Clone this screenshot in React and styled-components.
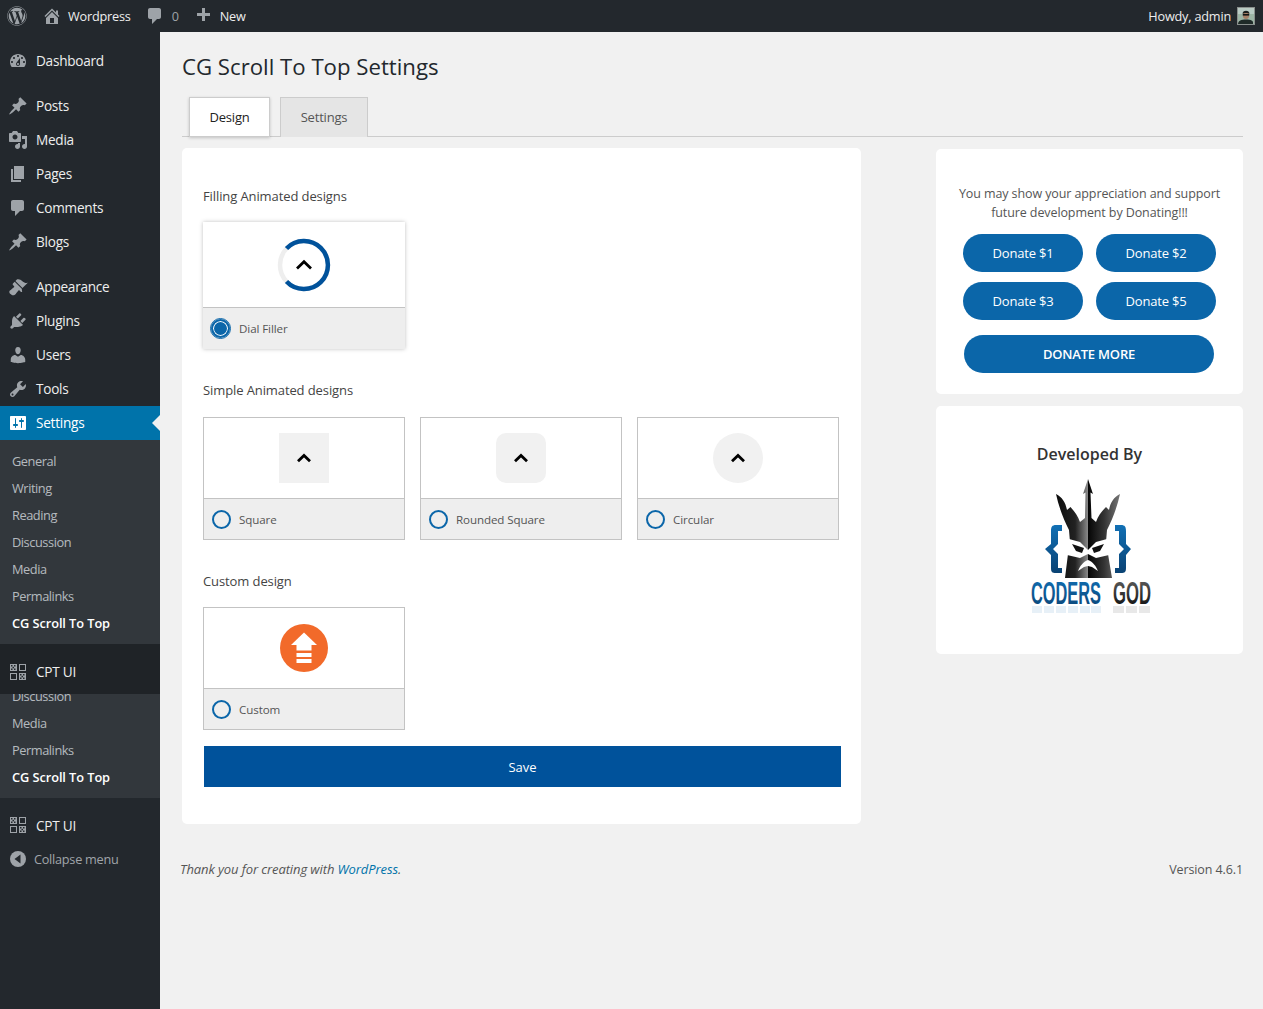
import React from 'react'
import styled, { createGlobalStyle } from 'styled-components'
import { FaWordpress } from 'react-icons/fa'

const Global = createGlobalStyle`
  body {
    margin: 0;
    background: #f1f1f1;
    font-family: "Open Sans", "Noto Sans", sans-serif;
    color: #444;
  }
  * { box-sizing: border-box; }
`

const paths = {
  dashboard: 'M3.76 16h12.48c1.1-1.37 1.76-3.11 1.76-5 0-4.42-3.58-8-8-8s-8 3.58-8 8c0 1.89.66 3.63 1.76 5zM10 4c.55 0 1 .45 1 1s-.45 1-1 1-1-.45-1-1 .45-1 1-1zM6 6c.55 0 1 .45 1 1s-.45 1-1 1-1-.45-1-1 .45-1 1-1zm8 0c.55 0 1 .45 1 1s-.45 1-1 1-1-.45-1-1 .45-1 1-1zm-5.37 5.55L12 7v6c0 1.1-.9 2-2 2s-2-.9-2-2c0-.57.24-1.08.63-1.45zM4 10c.55 0 1 .45 1 1s-.45 1-1 1-1-.45-1-1 .45-1 1-1zm12 0c.55 0 1 .45 1 1s-.45 1-1 1-1-.45-1-1 .45-1 1-1zm-5 3c0-.55-.45-1-1-1s-1 .45-1 1 .45 1 1 1 1-.45 1-1z',
  home: 'M16 8.5l1.53 1.53-1.06 1.06L10 4.62l-6.47 6.47-1.06-1.06L10 2.5l4 4v-2h2v4zm-6-2.46l6 5.99V18H4v-5.97zM12 17v-5H8v5h4z',
  comment: 'M5 2h9c1.1 0 2 .9 2 2v7c0 1.1-.9 2-2 2h-2l-5 5v-5H5c-1.1 0-2-.9-2-2V4c0-1.1.9-2 2-2z',
  plus: 'M17 7v3h-5v5H9v-5H4V7h5V2h3v5h5z',
  pin: 'M10.44 3.02l1.82-1.82 6.36 6.35-1.83 1.82c-1.05-.68-2.48-.57-3.41.36l-.75.75c-.92.93-1.04 2.35-.35 3.41l-1.83 1.82-2.41-2.41-2.8 2.79c-.42.42-3.38 2.71-3.8 2.29s1.86-3.39 2.28-3.81l2.79-2.79L4.1 9.36l1.83-1.82c1.05.69 2.48.57 3.4-.36l.75-.75c.93-.92 1.05-2.35.36-3.41z',
  media: 'M13 11V4c0-.55-.45-1-1-1h-1.67L9 1H5L3.67 3H2c-.55 0-1 .45-1 1v7c0 .55.45 1 1 1h10c.55 0 1-.45 1-1zM7 4.5c1.38 0 2.5 1.12 2.5 2.5S8.38 9.5 7 9.5 4.5 8.38 4.5 7 5.62 4.5 7 4.5zM14 6h5v10.5c0 1.38-1.12 2.5-2.5 2.5S14 17.88 14 16.5s1.12-2.5 2.5-2.5c.17 0 .34.02.5.05V9h-3V6zm-4 8.05V13h2v3.5c0 1.38-1.12 2.5-2.5 2.5S7 17.88 7 16.5 8.12 14 9.5 14c.17 0 .34.02.5.05z',
  page: 'M6 15V2h10v13H6zm-1 1h8v2H3V5h2v11z',
  brush: 'M14.48 11.06L7.41 3.99l1.5-1.5c.5-.56 2.3-.47 3.51.32 1.21.8 1.43 1.28 2.91 2.1 1.18.64 2.45 1.26 4.45.85zm-.71.71L6.7 4.7 4.93 6.47c-.39.39-.39 1.02 0 1.41l1.06 1.06c.39.39.39 1.03 0 1.42-.6.6-1.43 1.11-2.21 1.69-.35.26-.7.53-1.01.84C1.43 13.23.4 14.96 2.56 17.1c2.15 2.15 3.87 1.11 5.2-.22.31-.31.58-.66.84-1.01.58-.78 1.09-1.61 1.69-2.21.39-.39 1.02-.39 1.41 0l1.06 1.06c.39.39 1.02.39 1.41 0z',
  plugin: 'M13.11 4.36L9.87 7.6 8 5.73l3.24-3.24c.35-.34 1.05-.2 1.56.32.52.51.66 1.21.31 1.55zm-8 1.77l.91-1.12 9.01 9.01-1.19.84c-.71.71-2.63 1.16-3.82 1.16H6.14L4.9 17.26c-.59.59-1.54.59-2.12 0-.59-.58-.59-1.53 0-2.12l1.24-1.24v-3.88c0-1.13.4-3.19 1.09-3.89zm7.26 3.97l3.24-3.24c.34-.35 1.04-.21 1.55.31.52.51.66 1.21.31 1.55l-3.24 3.25z',
  users: 'M10 9.25c-2.27 0-2.73-3.44-2.73-3.44C7 4.02 7.82 2 9.97 2c2.16 0 2.98 2.02 2.71 3.81 0 0-.41 3.44-2.68 3.44zm0 2.57L12.72 10c2.39 0 4.52 2.33 4.52 4.53v2.49s-3.65 1.13-7.24 1.13c-3.65 0-7.24-1.13-7.24-1.13v-2.49c0-2.25 1.94-4.48 4.47-4.48z',
  tools: 'M16.68 9.77c-1.34 1.34-3.3 1.67-4.95.99l-5.41 6.52c-.99.99-2.59.99-3.58 0s-.99-2.59 0-3.57l6.52-5.42c-.68-1.65-.35-3.61.99-4.95 1.28-1.28 3.12-1.62 4.72-1.06l-2.89 2.89 2.82 2.82 2.86-2.87c.53 1.58.18 3.39-1.08 4.65zM3.81 16.21c.4.39 1.04.39 1.43 0 .4-.4.4-1.04 0-1.43-.39-.4-1.03-.4-1.43 0-.39.39-.39 1.03 0 1.43z',
  settings: 'M18 16V4c0-.55-.45-1-1-1H3c-.55 0-1 .45-1 1v12c0 .55.45 1 1 1h14c.55 0 1-.45 1-1zM8 11h1c.55 0 1 .45 1 1s-.45 1-1 1H8v1.5c0 .28-.22.5-.5.5s-.5-.22-.5-.5V13H6c-.55 0-1-.45-1-1s.45-1 1-1h1V5.5c0-.28.22-.5.5-.5s.5.22.5.5V11zm5-2h-1c-.55 0-1-.45-1-1s.45-1 1-1h1V5.5c0-.28.22-.5.5-.5s.5.22.5.5V7h1c.55 0 1 .45 1 1s-.45 1-1 1h-1v5.5c0 .28-.22.5-.5.5s-.5-.22-.5-.5V9z',
}

const Dash = ({ name, size = 20, color = '#9ea3a8' }) => (
  <svg width={size} height={size} viewBox="0 0 20 20" fill={color} style={{ flex: 'none' }}>
    <path d={paths[name]} fillRule="evenodd" />
  </svg>
)

const CptIcon = () => (
  <svg width="20" height="20" viewBox="0 0 20 20" style={{ flex: 'none' }}>
    <g fill="#9ea3a8">
      <rect x="2" y="2" width="7" height="7" />
      <rect x="11" y="11" width="7" height="7" />
    </g>
    <g fill="#23282d">
      <rect x="3" y="3" width="1.5" height="1.5" /><rect x="6" y="3" width="1.5" height="1.5" />
      <rect x="4.5" y="4.8" width="1.5" height="1.5" />
      <rect x="3" y="6.5" width="1.5" height="1.5" /><rect x="6" y="6.5" width="1.5" height="1.5" />
      <rect x="12" y="12" width="1.5" height="1.5" /><rect x="15" y="12" width="1.5" height="1.5" />
      <rect x="13.5" y="13.8" width="1.5" height="1.5" />
      <rect x="12" y="15.5" width="1.5" height="1.5" /><rect x="15" y="15.5" width="1.5" height="1.5" />
    </g>
    <g fill="none" stroke="#9ea3a8">
      <rect x="11.5" y="2.5" width="6" height="6" />
      <rect x="2.5" y="11.5" width="6" height="6" />
    </g>
  </svg>
)

const CollapseIcon = () => (
  <svg width="16" height="16" viewBox="0 0 16 16" style={{ flex: 'none' }}>
    <circle cx="8" cy="8" r="8" fill="#9ea3a8" />
    <path d="M10.5 3.5v9L4.5 8z" fill="#23282d" />
  </svg>
)

const Avatar = () => (
  <svg width="18" height="18" viewBox="0 0 18 18" style={{ flex: 'none' }}>
    <rect width="18" height="18" fill="#8a8f8d" />
    <rect x="1" y="1" width="16" height="16" fill="#9db5a6" />
    <rect x="1" y="1" width="16" height="6" fill="#b9cbc4" />
    <path d="M1 17c.4-3.500 3-4.500 8-4.500s7.600 1 7 4.500z" fill="#1f2a28" />
    <ellipse cx="9" cy="8" rx="3.200" ry="4" fill="#a67f66" />
    <path d="M5.600 7C5.200 2.800 12.800 2.800 12.400 7c-1.400-1.300-5.400-1.300-6.800 0z" fill="#1a1f1e" />
    <rect x="5.800" y="7" width="6.400" height="1.600" fill="#111514" />
  </svg>
)

const Chevron = () => (
  <svg width="16" height="10" viewBox="0 0 16 10" fill="none">
    <path d="M2 8.200 8 2.400 14 8.200" stroke="#000" strokeWidth="2.800" />
  </svg>
)

const AdminBar = styled.header`
  height: 32px;
  background: #23282d;
  display: flex;
  align-items: center;
  padding: 0 8px 0 7px;
  font-size: 12.7px;
  letter-spacing: -0.2px;
  color: #eee;
`

const BarItem = styled.div`
  display: flex;
  align-items: center;
  gap: ${p => p.$gap || 6}px;
  margin-left: ${p => p.$left || 0}px;
`

const Muted = styled.span`
  color: #9ea3a8;
`

const Spacer = styled.div`
  flex: 1;
`

const Shell = styled.div`
  display: grid;
  grid-template-columns: 160px 1fr;
  min-height: 977px;
`

const Side = styled.nav`
  background: #23282d;
  padding-top: 12px;
`

const MenuRow = styled.div`
  position: relative;
  height: 34px;
  display: flex;
  align-items: center;
  gap: ${p => p.$gap || 8}px;
  padding: 0 0 1px ${p => p.$left || 8}px;
  font-size: ${p => (p.$muted ? 12.7 : 13.6)}px;
  letter-spacing: -0.25px;
  color: ${p => (p.$active ? '#fff' : p.$muted ? '#a0a5aa' : '#eee')};
  background: ${p => (p.$active ? '#0073aa' : 'transparent')};
  margin-top: ${p => (p.$sep ? 11 : 0)}px;
  ${p => p.$active && `
    &::after {
      content: '';
      position: absolute;
      right: 0;
      top: 9px;
      border: 8px solid transparent;
      border-right-color: #f1f1f1;
      border-left-width: 0;
    }
  `}
`

const SubPanel = styled.div`
  background: #32373c;
  padding: ${p => (p.$clip ? '0 0 6.5px' : '7.5px 0')};
  overflow: hidden;
`

const SubRow = styled.div`
  height: 27px;
  line-height: 27px;
  padding-left: 12px;
  font-size: 12.8px;
  letter-spacing: ${p => (p.$current ? '-0.08px' : '-0.45px')};
  color: ${p => (p.$current ? '#fff' : 'rgba(240, 245, 250, 0.7)')};
  font-weight: ${p => (p.$current ? 600 : 400)};
  margin-top: ${p => (p.$clip ? -11 : 0)}px;
`

const DarkBand = styled.div`
  background: #1f2327;
  padding: 11px 0 5px;
`

const Main = styled.main`
  padding: 19px 20px 0 22px;
`

const Title = styled.h1`
  margin: 0;
  font-size: 22.2px;
  line-height: 31px;
  font-weight: 400;
  color: #23282d;
`

const TabRow = styled.div`
  margin-top: 15px;
  height: 40px;
  border-bottom: 1px solid #ccc;
  display: flex;
  gap: 10px;
  padding-left: 7px;
`

const Tab = styled.div`
  height: 40px;
  width: ${p => p.$w}px;
  display: flex;
  align-items: center;
  justify-content: center;
  padding-bottom: ${p => (p.$active ? 0 : 2)}px;
  font-size: 13px;
  letter-spacing: -0.2px;
  color: ${p => (p.$active ? '#222' : '#555')};
  background: ${p => (p.$active ? '#fff' : '#e5e5e5')};
  border: 1px solid #ccc;
  border-bottom: ${p => (p.$active ? '1px solid #ccc' : '0')};
  box-shadow: ${p => (p.$active ? '0 1px 3px rgba(0,0,0,.2)' : 'none')};
`

const Columns = styled.div`
  display: grid;
  grid-template-columns: 679px 307px;
  justify-content: space-between;
  margin-top: 11px;
  align-items: start;
`

const Panel = styled.section`
  background: #fff;
  border-radius: 5px;
  padding: 38px 21px 37px;
`

const Heading = styled.h3`
  margin: ${p => (p.$first ? 0 : 31)}px 0 ${p => p.$after || 16}px;
  font-size: 13px;
  line-height: 20px;
  font-weight: 400;
  letter-spacing: -0.1px;
  color: #444;
`

const CardRow = styled.div`
  display: flex;
  gap: 15px;
`

const Card = styled.div`
  width: 202px;
  border: ${p => (p.$raised ? '0' : '1px solid #c3c3c3')};
  box-shadow: ${p => (p.$raised ? '0 0 4px rgba(0,0,0,.25)' : 'none')};
  background: #fff;
`

const Preview = styled.div`
  height: ${p => (p.$raised ? 85 : 80)}px;
  display: flex;
  align-items: center;
  justify-content: center;
`

const ArrowBox = styled.div`
  width: 50px;
  height: 50px;
  background: #f1f1f1;
  border-radius: ${p => p.$radius || 0};
  display: flex;
  align-items: center;
  justify-content: center;
`

const CardFoot = styled.div`
  height: ${p => (p.$raised ? 42 : 41)}px;
  background: #eee;
  border-top: 1px solid #c3c3c3;
  display: flex;
  align-items: center;
  gap: ${p => (p.$raised ? 9 : 8)}px;
  padding-left: 8px;
  font-size: 11.6px;
  letter-spacing: -0.1px;
  color: #555;
`

const Radio = styled.span`
  width: 19px;
  height: 19px;
  border-radius: 50%;
  border: 2px solid #0b66a9;
  background: ${p => (p.$on ? '#0b66a9' : 'transparent')};
  box-shadow: ${p => (p.$on ? 'inset 0 0 0 1px #fff' : 'none')};
  outline: ${p => (p.$on ? '1px solid #0b66a9' : 'none')};
  flex: none;
`

const SaveButton = styled.button`
  display: block;
  width: 637px;
  height: 41px;
  margin: 16px 0 0 1px;
  border: 0;
  background: #00529b;
  color: #fff;
  font: inherit;
  font-size: 13px;
`

const SideCol = styled.aside`
  display: flex;
  flex-direction: column;
  gap: 12px;
  padding-top: 1px;
`

const SideCard = styled.div`
  background: #fff;
  border-radius: 5px;
  padding: ${p => p.$pad};
  text-align: center;
`

const Note = styled.p`
  margin: 0;
  font-size: 12.5px;
  line-height: 19px;
  letter-spacing: -0.1px;
  color: #555;
`

const DonateGrid = styled.div`
  display: grid;
  grid-template-columns: 120px 120px;
  gap: 10px 13px;
  justify-content: center;
  margin-top: 12px;
`

const Donate = styled.button`
  width: ${p => p.$w || 120}px;
  height: 38px;
  border: 0;
  border-radius: 19px;
  background: #0b66a9;
  color: #fff;
  font: inherit;
  font-size: 13px;
  letter-spacing: -0.2px;
  font-weight: ${p => (p.$strong ? 600 : 400)};
  margin: ${p => (p.$strong ? '15px 1px 0 0' : 0)};
`

const DevTitle = styled.h2`
  margin: 0;
  font-size: 16px;
  line-height: 24px;
  font-weight: 600;
  color: #333;
`

const LogoWrap = styled.div`
  height: 150px;
  margin-top: 4px;
`

const Footer = styled.footer`
  margin: 37px 0 0 -2px;
  display: flex;
  justify-content: space-between;
  font-size: 12.5px;
  line-height: 18px;
  letter-spacing: -0.1px;
  color: #555;
`

const Thanks = styled.em`
  display: block;
  font-style: italic;
  font-size: 13px;
  line-height: 16px;
  > a { color: #0073aa; text-decoration: none; }
`

const reflectBars = [
  [22, 10, '#0f6cb0'], [34, 10, '#0f6cb0'], [46, 10, '#0f6cb0'], [58, 10, '#0f6cb0'], [70, 10, '#0f6cb0'], [81, 10, '#0f6cb0'],
  [103, 11, '#222'], [116, 11, '#222'], [129, 11, '#222'],
]

const Logo = () => (
  <svg width="160" height="150" viewBox="0 0 160 150">
    <defs>
      <linearGradient id="lhalf" x1="0" x2="1" y1="0" y2="0">
        <stop offset="0" stopColor="#0c0c0c" />
        <stop offset="0.6" stopColor="#222" />
        <stop offset="1" stopColor="#8a8a8a" />
      </linearGradient>
      <linearGradient id="rhalf" x1="0" x2="1" y1="0" y2="0">
        <stop offset="0" stopColor="#050505" />
        <stop offset="0.5" stopColor="#333" />
        <stop offset="1" stopColor="#777" />
      </linearGradient>
      <linearGradient id="blue" x1="0" x2="0" y1="0" y2="1">
        <stop offset="0" stopColor="#1170b5" />
        <stop offset="1" stopColor="#0a4273" />
      </linearGradient>
      <linearGradient id="dark" x1="0" x2="0" y1="0" y2="1">
        <stop offset="0" stopColor="#666" />
        <stop offset="1" stopColor="#050505" />
      </linearGradient>
    </defs>
    <path d="M78 9 73 24 75.500 22.500 75 48 70 52C68 46 64 41 60.500 37L57 40C55.500 32 52 27 46 24 49 38 54 50 59 60L60 72 58 84 55 108H78Z" fill="url(#lhalf)" />
    <path d="M78 9 83 24 80.500 22.500 81.500 48 86 52C88 46 92 41 96 37L99 40C100.500 32 104 27 110 24 107 38 102 50 97 60L96 72 98 84 102 108H78Z" fill="url(#rhalf)" />
    <path d="M59 69 70 72 78 80 86 72 97 69 99 85 86 88 78 84 70 88 57 85Z" fill="#fff" />
    <path d="M62 74 74 78 72 83 66 81ZM94 74 82 78 84 83 90 81Z" fill="#111" />
    <path d="M78 90C73 92 70 96 68 101L74 97 78 96 82 97 88 101C86 96 83 92 78 90Z" fill="#fff" />
    <path d="M52 55H46C42 55 41 57 41 61V74L35 79 41 85V98C41 102 42 103 46 103H52V98H48V84L43 79 48 74V61H52Z" fill="url(#blue)" />
    <path d="M105 55H111C115 55 116 57 116 61V74L121 79 116 85V98C116 102 115 103 111 103H105V98H109V84L114 79 109 74V61H105Z" fill="url(#blue)" />
    <g fontFamily="'Liberation Sans Narrow', 'Liberation Sans', sans-serif" fontWeight="700" fontSize="31">
      <text x="21" y="134" textLength="70" lengthAdjust="spacingAndGlyphs" fill="url(#blue)">CODERS</text>
      <text x="103" y="134" textLength="38" lengthAdjust="spacingAndGlyphs" fill="url(#dark)">GOD</text>
    </g>
    {reflectBars.map(([x, w, c]) => (
      <rect key={x} x={x} y="136" width={w} height="7" fill={c} opacity="0.1" />
    ))}
  </svg>
)

const Dial = () => (
  <svg width="54" height="54" viewBox="0 0 54 54">
    <circle cx="27" cy="27" r="24" fill="none" stroke="#eee" strokeWidth="4.500" />
    <path d="M9.500 10.500A24 24 0 1 1 9.500 43.500" fill="none" stroke="#00529b" strokeWidth="4.500" />
    <path d="M20 30.500 27 23.800 34 30.500" fill="none" stroke="#000" strokeWidth="2.800" />
  </svg>
)

const UploadIcon = () => (
  <svg width="48" height="48" viewBox="0 0 48 48">
    <circle cx="24" cy="24" r="24" fill="#f26a2a" />
    <path d="M24 8.500 37 21H11Z" fill="#fff" />
    <rect x="16.500" y="21" width="15" height="5.500" fill="#fff" />
    <rect x="16.500" y="29" width="15" height="4" fill="#fff" />
    <rect x="16.500" y="35" width="15" height="4" fill="#fff" />
  </svg>
)

const mainItems = [
  ['pin', 'Posts'],
  ['media', 'Media'],
  ['page', 'Pages'],
  ['comment', 'Comments'],
  ['pin', 'Blogs'],
]
const adminItems = [
  ['brush', 'Appearance'],
  ['plugin', 'Plugins'],
  ['users', 'Users'],
  ['tools', 'Tools'],
]
const subItems = ['General', 'Writing', 'Reading', 'Discussion', 'Media', 'Permalinks']
const simpleCards = [
  { label: 'Square', radius: '0' },
  { label: 'Rounded Square', radius: '10px' },
  { label: 'Circular', radius: '50%' },
]

export default function App() {
  return (
    <>
      <Global />
      <AdminBar>
        <FaWordpress size={20} color="#9ea3a8" />
        <BarItem $left={15}><Dash name="home" />Wordpress</BarItem>
        <BarItem $left={14} $gap={7}><Dash name="comment" /><Muted>0</Muted></BarItem>
        <BarItem $left={14} $gap={7}><Dash name="plus" />New</BarItem>
        <Spacer />
        <BarItem>Howdy, admin<Avatar /></BarItem>
      </AdminBar>
      <Shell>
        <Side>
          <MenuRow><Dash name="dashboard" />Dashboard</MenuRow>
          {mainItems.map(([icon, label], i) => (
            <MenuRow key={label} $sep={i === 0}><Dash name={icon} />{label}</MenuRow>
          ))}
          {adminItems.map(([icon, label], i) => (
            <MenuRow key={label} $sep={i === 0}><Dash name={icon} />{label}</MenuRow>
          ))}
          <MenuRow $active><Dash name="settings" color="#fff" />Settings</MenuRow>
          <SubPanel>
            {subItems.map(s => <SubRow key={s}>{s}</SubRow>)}
            <SubRow $current>CG Scroll To Top</SubRow>
          </SubPanel>
          <DarkBand>
            <MenuRow><CptIcon />CPT UI</MenuRow>
          </DarkBand>
          <SubPanel $clip>
            <SubRow $clip>Discussion</SubRow>
            <SubRow>Media</SubRow>
            <SubRow>Permalinks</SubRow>
            <SubRow $current>CG Scroll To Top</SubRow>
          </SubPanel>
          <MenuRow $sep><CptIcon />CPT UI</MenuRow>
          <MenuRow $muted $left={10} $gap={8}><CollapseIcon />Collapse menu</MenuRow>
        </Side>
        <Main>
          <Title>CG Scroll To Top Settings</Title>
          <TabRow>
            <Tab $active $w={81}>Design</Tab>
            <Tab $w={88}>Settings</Tab>
          </TabRow>
          <Columns>
            <Panel>
              <Heading $first>Filling Animated designs</Heading>
              <Card $raised>
                <Preview $raised><Dial /></Preview>
                <CardFoot $raised><Radio $on />Dial Filler</CardFoot>
              </Card>
              <Heading $after={17}>Simple Animated designs</Heading>
              <CardRow>
                {simpleCards.map(c => (
                  <Card key={c.label}>
                    <Preview><ArrowBox $radius={c.radius}><Chevron /></ArrowBox></Preview>
                    <CardFoot><Radio />{c.label}</CardFoot>
                  </Card>
                ))}
              </CardRow>
              <Heading>Custom design</Heading>
              <Card>
                <Preview><UploadIcon /></Preview>
                <CardFoot><Radio />Custom</CardFoot>
              </Card>
              <SaveButton>Save</SaveButton>
            </Panel>
            <SideCol>
              <SideCard $pad="35px 20px 21px">
                <Note>You may show your appreciation and support<br />future development by Donating!!!</Note>
                <DonateGrid>
                  <Donate>Donate $1</Donate>
                  <Donate>Donate $2</Donate>
                  <Donate>Donate $3</Donate>
                  <Donate>Donate $5</Donate>
                </DonateGrid>
                <Donate $w={250} $strong>DONATE MORE</Donate>
              </SideCard>
              <SideCard $pad="36px 0 34px">
                <DevTitle>Developed By</DevTitle>
                <LogoWrap><Logo /></LogoWrap>
              </SideCard>
            </SideCol>
          </Columns>
          <Footer>
            <Thanks>Thank you for creating with <a href="#wp">WordPress</a>.</Thanks>
            <span>Version 4.6.1</span>
          </Footer>
        </Main>
      </Shell>
    </>
  )
}
